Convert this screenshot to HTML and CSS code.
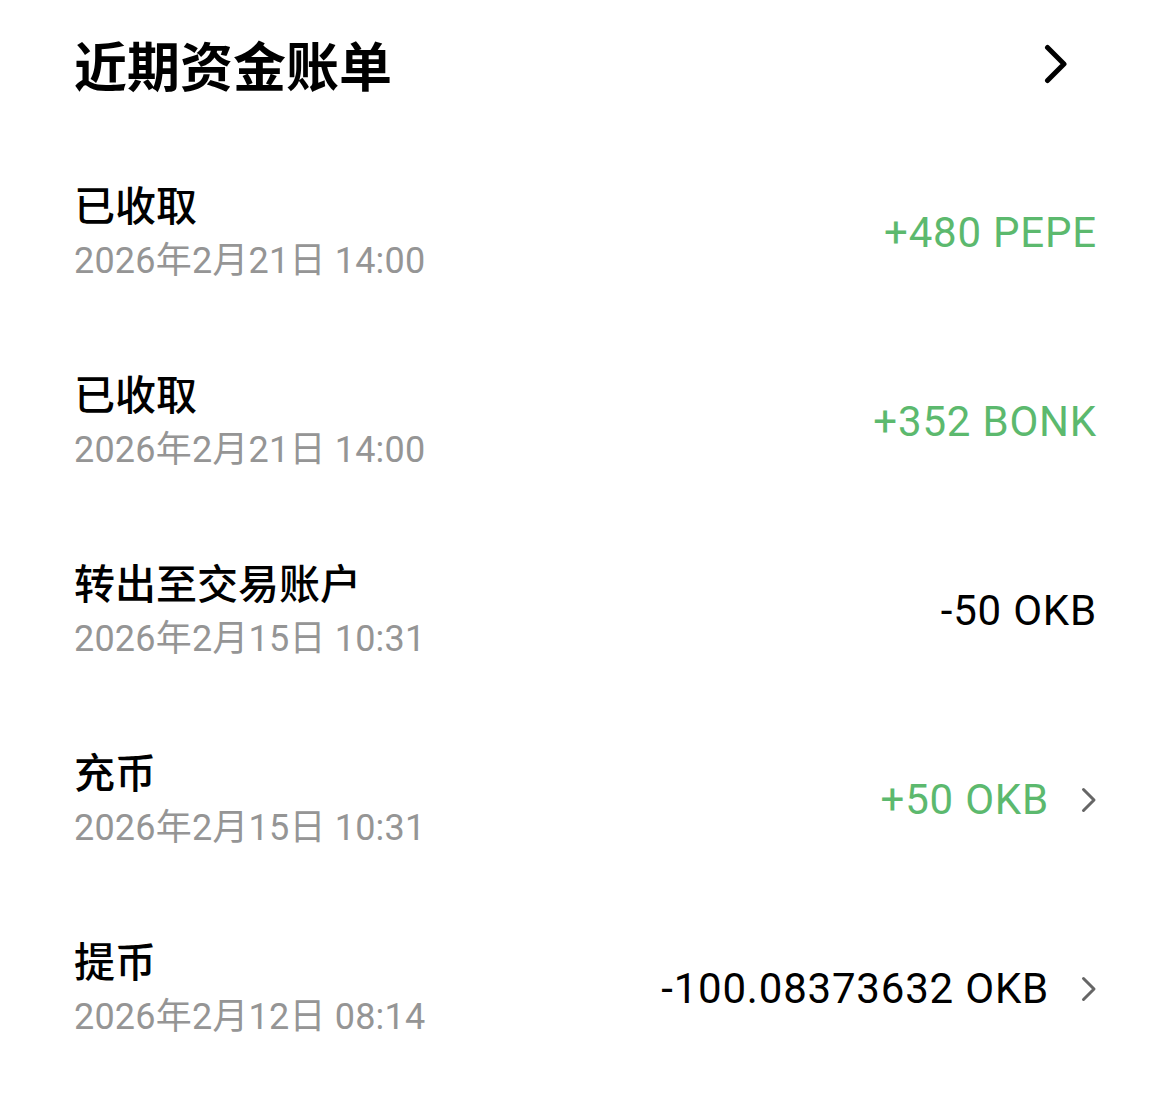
FILE: index.html
```html
<!DOCTYPE html>
<html>
<head>
  <meta charset="UTF-8">
  <meta name="viewport" content="width=device-width, initial-scale=1.0">
  <link rel="stylesheet" href="styles.css">
</head>
<body>
  <div class="bills">
    <!-- 标题 -->
    <div class="bills-header">
      <h1>近期资金账单</h1>
      <svg class="header-arrow" width="24" height="40" viewBox="0 0 24 40">
        <path d="M3.5 3.5 L20 20 L3.5 36.5" fill="none" stroke="#000" stroke-width="5" stroke-linecap="round" stroke-linejoin="round"/>
      </svg>
    </div>

    <div class="bill-row">
      <div class="bill-info">
        <div class="bill-title">已收取</div>
        <div class="bill-date">2026年2月21日 14:00</div>
      </div>
      <div class="bill-amount plus">+480 PEPE</div>
    </div>

    <div class="bill-row">
      <div class="bill-info">
        <div class="bill-title">已收取</div>
        <div class="bill-date">2026年2月21日 14:00</div>
      </div>
      <div class="bill-amount plus">+352 BONK</div>
    </div>

    <div class="bill-row">
      <div class="bill-info">
        <div class="bill-title">转出至交易账户</div>
        <div class="bill-date">2026年2月15日 10:31</div>
      </div>
      <div class="bill-amount">-50 OKB</div>
    </div>

    <div class="bill-row">
      <div class="bill-info">
        <div class="bill-title">充币</div>
        <div class="bill-date">2026年2月15日 10:31</div>
      </div>
      <div class="bill-amount plus">+50 OKB</div>
      <svg class="row-arrow" width="16" height="26" viewBox="0 0 16 26">
        <path d="M2.5 2.5 L13 13 L2.5 23.5" fill="none" stroke="#666" stroke-width="3" stroke-linecap="round" stroke-linejoin="round"/>
      </svg>
    </div>

    <div class="bill-row">
      <div class="bill-info">
        <div class="bill-title">提币</div>
        <div class="bill-date">2026年2月12日 08:14</div>
      </div>
      <div class="bill-amount">-100.08373632 OKB</div>
      <svg class="row-arrow" width="16" height="26" viewBox="0 0 16 26">
        <path d="M2.5 2.5 L13 13 L2.5 23.5" fill="none" stroke="#666" stroke-width="3" stroke-linecap="round" stroke-linejoin="round"/>
      </svg>
    </div>
  </div>
</body>
</html>
```

FILE: styles.css
```css
* {
  margin: 0;
  padding: 0;
  box-sizing: border-box;
}

body {
  background: #fff;
  font-family: Roboto, "Noto Sans CJK SC", sans-serif;
  color: #000;
}

.bills {
  padding: 0 73px 0 74px;
}

.bills-header {
  height: 138px;
  display: flex;
  align-items: center;
  justify-content: space-between;
  padding-right: 29px;
  padding-bottom: 10px;
}

.bills-header h1 {
  font-size: 53px;
  font-weight: 700;
  line-height: 60px;
  font-family: "Noto Sans CJK SC", sans-serif;
}

.bill-row {
  height: 189px;
  display: flex;
  align-items: center;
}

.bill-info {
  flex: 1;
}

.bill-title {
  font-size: 41px;
  font-weight: 500;
  line-height: 56px;
  font-family: "Noto Sans CJK SC", sans-serif;
}

.bill-date {
  font-size: 36px;
  line-height: 60px;
  color: #959595;
  letter-spacing: 0.2px;
}

.bill-amount {
  font-size: 42px;
  line-height: 56px;
  letter-spacing: 0.8px;
  color: #000;
}

.bill-amount.plus {
  color: #5cb96e;
}

.row-arrow {
  margin-left: 32px;
}
```
